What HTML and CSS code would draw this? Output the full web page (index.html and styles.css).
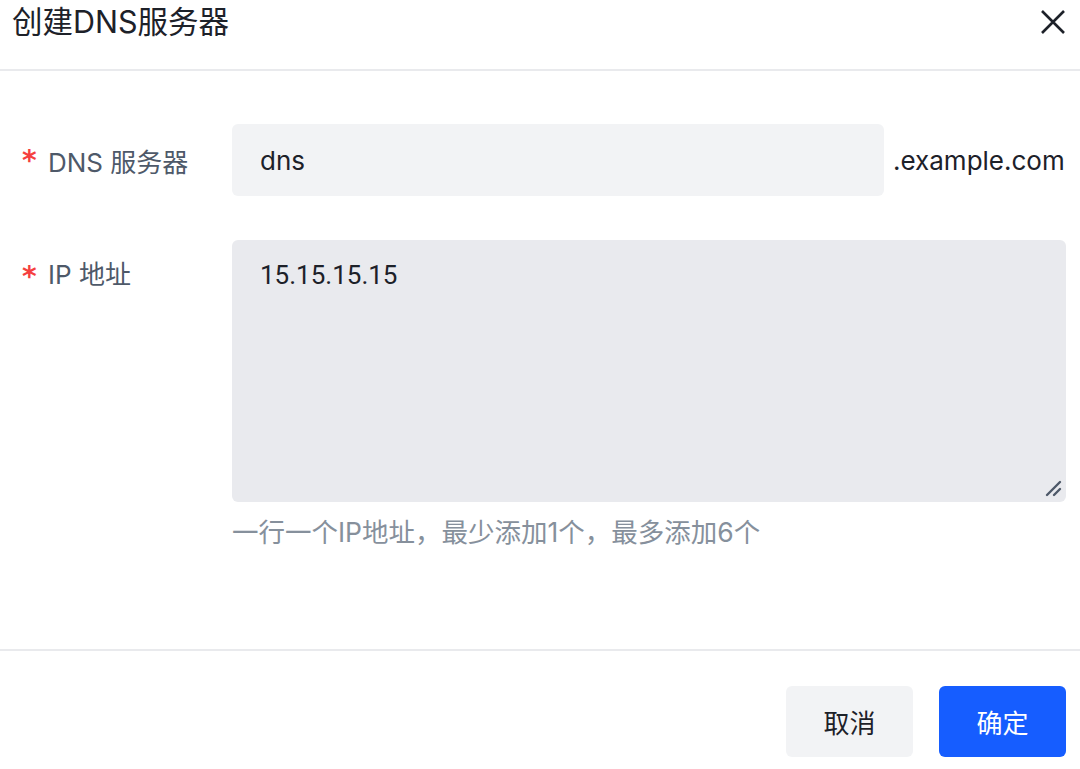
FILE: index.html
```html
<!DOCTYPE html>
<html lang="zh-CN">
<head>
<meta charset="utf-8">
<title>创建DNS服务器</title>
<link rel="stylesheet" href="styles.css">
</head>
<body>
<div class="dialog">
  <header class="dialog-header">
    <h1 class="dialog-title">创建DNS服务器</h1>
    <button class="close-btn" aria-label="关闭">
      <svg width="26" height="26" viewBox="0 0 26 26"><path d="M2 2L24 24M24 2L2 24" stroke="#1d2129" stroke-width="2.6" stroke-linecap="butt" fill="none"/></svg>
    </button>
  </header>
  <main class="dialog-body">
    <div class="form-row row-dns">
      <label class="form-label"><span class="req">*</span>DNS 服务器</label>
      <div class="form-control inline">
        <div class="input">dns</div>
        <span class="suffix">.example.com</span>
      </div>
    </div>
    <div class="form-row row-ip">
      <label class="form-label top"><span class="req">*</span>IP 地址</label>
      <div class="form-control">
        <div class="textarea">15.15.15.15
          <svg class="resize" width="18" height="18" viewBox="0 0 18 18"><path d="M3 16L16 3M10 16L16 10" stroke="#4e5969" stroke-width="2.4" stroke-linecap="round" fill="none"/></svg>
        </div>
        <div class="hint">一行一个IP地址，最少添加1个，最多添加6个</div>
      </div>
    </div>
  </main>
  <footer class="dialog-footer">
    <button class="btn btn-secondary">取消</button>
    <button class="btn btn-primary">确定</button>
  </footer>
</div>
</body>
</html>
```
FILE: styles.css
```css
* { box-sizing: border-box; }
html, body { margin: 0; padding: 0; background: #fff; }
body {
  font-family: Inter, "Noto Sans CJK SC", "Noto Sans", sans-serif;
  color: #1d2129;
  width: 1080px;
  height: 769px;
  overflow: hidden;
}
.dialog { display: flex; flex-direction: column; height: 769px; }
.dialog-header {
  height: 71px;
  border-bottom: 2px solid #e9eaed;
  display: flex;
  align-items: flex-start;
  justify-content: space-between;
  padding: 0 14px 0 12px;
}
.dialog-title {
  margin: 0;
  font-size: 30.5px;
  font-weight: 400;
  line-height: 44px;
  color: #1d2129;
}
.close-btn {
  border: 0;
  background: none;
  padding: 0;
  margin-top: 9px;
  width: 26px;
  height: 26px;
  display: flex;
}
.dialog-body {
  flex: 0 0 auto;
  height: 580px;
  padding: 53px 14px 0 22px;
  border-bottom: 2px solid #e9eaed;
}
.form-row { display: flex; }
.row-dns { align-items: center; height: 72px; }
.row-ip { margin-top: 44px; }
.form-label {
  width: 210px;
  flex: 0 0 210px;
  font-size: 26px;
  color: #4e5969;
  display: flex;
  align-items: center;
}
.form-label.top { align-items: flex-start; padding-top: 17px; line-height: 36px; }
.req {
  color: #f53f3f;
  width: 26px;
  font-size: 28px;
  font-weight: 700;
  line-height: 36px;
  padding-top: 2px;
  font-family: "DejaVu Sans", sans-serif;
}
.form-control { flex: 1; }
.form-control.inline { display: flex; align-items: center; height: 72px; }
.input {
  width: 652px;
  height: 72px;
  background: #f2f3f5;
  border-radius: 6px;
  padding: 0 28px;
  display: flex;
  align-items: center;
  font-size: 26px;
  color: #1d2129;
}
.suffix { margin-left: 9px; font-size: 26px; color: #1d2129; }
.textarea {
  position: relative;
  height: 262px;
  background: #e9eaee;
  border-radius: 6px;
  padding: 17px 28px;
  font-family: Roboto, "Noto Sans CJK SC", sans-serif;
  font-size: 26px;
  line-height: 36px;
  color: #1d2129;
}
.resize { position: absolute; right: 4px; bottom: 5px; }
.hint {
  margin-top: 12px;
  font-size: 26.5px;
  line-height: 36px;
  color: #86909c;
}
.dialog-footer {
  display: flex;
  justify-content: flex-end;
  gap: 26px;
  padding: 35px 14px 0 0;
}
.btn {
  width: 127px;
  height: 71px;
  border: 0;
  border-radius: 6px;
  font-family: inherit;
  font-size: 26px;
}
.btn-secondary { background: #f2f3f5; color: #1d2129; }
.btn-primary { background: #165dff; color: #fff; }
```
